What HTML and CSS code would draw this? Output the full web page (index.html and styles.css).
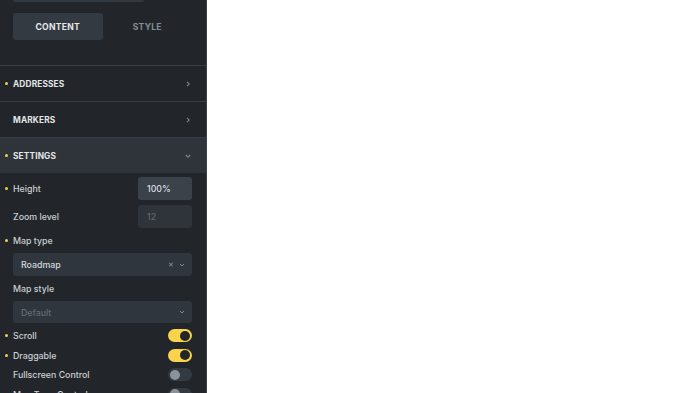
FILE: index.html
```html
<!DOCTYPE html>
<html lang="en">
<head>
<meta charset="utf-8">
<title>Map settings</title>
<link rel="stylesheet" href="styles.css">
</head>
<body>
<aside class="panel">
  <div class="top-input"></div>
  <div class="tabs">
    <div class="tab active">CONTENT</div>
    <div class="tab">STYLE</div>
  </div>

  <div class="section">
    <span class="dot"></span>
    <span class="section-title">ADDRESSES</span>
    <svg class="chev" viewBox="0 0 8 8" width="8" height="8"><path d="M3 1.8l2.2 2.2-2.2 2.2" fill="none" stroke="currentColor" stroke-width="1.1"/></svg>
  </div>
  <div class="section">
    <span class="section-title">MARKERS</span>
    <svg class="chev" viewBox="0 0 8 8" width="8" height="8"><path d="M3 1.8l2.2 2.2-2.2 2.2" fill="none" stroke="currentColor" stroke-width="1.1"/></svg>
  </div>
  <div class="section open">
    <span class="dot"></span>
    <span class="section-title">SETTINGS</span>
    <svg class="chev" viewBox="0 0 8 8" width="8" height="8"><path d="M1.8 3l2.2 2.2 2.2-2.2" fill="none" stroke="currentColor" stroke-width="1.1"/></svg>
  </div>

  <div class="controls">
    <div class="row">
      <span class="dot"></span>
      <span class="label">Height</span>
      <div class="num-input">100%</div>
    </div>
    <div class="row">
      <span class="label">Zoom level</span>
      <div class="num-input placeholder">12</div>
    </div>
    <div class="label-row">
      <span class="dot"></span>
      <span class="label">Map type</span>
    </div>
    <div class="select">
      <span class="select-value">Roadmap</span>
      <span class="clear">&#x2715;</span>
      <svg class="sel-chev" viewBox="0 0 8 8" width="8" height="8"><path d="M2 3l2 2 2-2" fill="none" stroke="currentColor" stroke-width="1"/></svg>
    </div>
    <div class="label-row">
      <span class="label">Map style</span>
    </div>
    <div class="select select-last">
      <span class="select-value placeholder">Default</span>
      <svg class="sel-chev" viewBox="0 0 8 8" width="8" height="8"><path d="M2 3l2 2 2-2" fill="none" stroke="currentColor" stroke-width="1"/></svg>
    </div>
    <div class="toggles">
      <div class="toggle-row">
        <span class="dot"></span>
        <span class="label">Scroll</span>
        <span class="toggle on"><span class="knob"></span></span>
      </div>
      <div class="toggle-row">
        <span class="dot"></span>
        <span class="label">Draggable</span>
        <span class="toggle on"><span class="knob"></span></span>
      </div>
      <div class="toggle-row">
        <span class="label">Fullscreen Control</span>
        <span class="toggle"><span class="knob"></span></span>
      </div>
      <div class="toggle-row">
        <span class="label">Map Type Control</span>
        <span class="toggle"><span class="knob"></span></span>
      </div>
    </div>
  </div>
</aside>
</body>
</html>
```

FILE: styles.css
```css
html, body {
  margin: 0;
  padding: 0;
  background: #ffffff;
  height: 100%;
  overflow: hidden;
}

body {
  font-family: Inter, "Noto Sans", sans-serif;
}

.panel {
  width: 206px;
  height: 393px;
  background: #22262a;
  border-right: 1px solid #3e444b;
  overflow: hidden;
  display: flex;
  flex-direction: column;
}

.top-input {
  margin: 0 62px 0 13px;
  height: 2px;
  background: #333941;
  border-radius: 0 0 3px 3px;
  flex: none;
}

.tabs {
  display: flex;
  margin: 11px 14px 0 13px;
  height: 27px;
  flex: none;
}

.tab {
  flex: 1;
  display: flex;
  align-items: center;
  justify-content: center;
  font-size: 8.6px;
  font-weight: 700;
  letter-spacing: 0.25px;
  color: #858c93;
  border-radius: 3px;
}

.tab.active {
  background: #333a42;
  color: #e6e8ea;
}

.section {
  flex: none;
  position: relative;
  height: 35px;
  border-top: 1px solid #373d44;
  display: flex;
  align-items: center;
  padding: 0 14px 0 13px;
}

.tabs + .section {
  margin-top: 25px;
}

.section.open {
  background: #2e343a;
}

.section-title {
  flex: 1;
  font-size: 8.3px;
  font-weight: 700;
  letter-spacing: 0.15px;
  color: #e4e6e8;
}

.chev {
  color: #7c838a;
  width: 8px;
  height: 8px;
}

.dot {
  position: absolute;
  left: 5px;
  top: 50%;
  width: 3px;
  height: 3px;
  margin-top: -1.5px;
  border-radius: 50%;
  background: #f5d04a;
}

.controls {
  padding: 4px 14px 0 13px;
  display: flex;
  flex-direction: column;
}

.label {
  font-size: 8.8px;
  font-weight: 500;
  color: #cbcfd3;
  flex: 1;
}

.row {
  position: relative;
  display: flex;
  align-items: center;
  height: 23px;
  margin-bottom: 5px;
}

.row .dot,
.label-row .dot,
.toggle-row .dot {
  left: -8px;
}

.num-input {
  width: 54px;
  height: 23px;
  box-sizing: border-box;
  padding-left: 9px;
  display: flex;
  align-items: center;
  background: #3b4249;
  border-radius: 3px;
  font-size: 8.8px;
  font-weight: 500;
  color: #dcdfe2;
}

.num-input.placeholder {
  background: #2e343a;
  color: #5f666d;
}

.row + .label-row {
  margin-top: 1px;
}

.label-row {
  position: relative;
  display: flex;
  align-items: center;
  height: 12px;
  margin: 0 0 7px;
}

.select {
  height: 23px;
  display: flex;
  align-items: center;
  padding: 0 6px 0 8px;
  background: #30363d;
  border-radius: 3px;
  margin-bottom: 6px;
}

.select.select-last {
  height: 22px;
  margin-bottom: 3px;
}

.select-value {
  flex: 1;
  font-size: 8.8px;
  font-weight: 500;
  color: #d6d9dc;
}

.select-value.placeholder {
  color: #646b72;
}

.clear {
  font-size: 7px;
  color: #8a9198;
  margin-right: 4px;
}

.sel-chev {
  color: #80878e;
}

.toggles {
  display: flex;
  flex-direction: column;
}

.toggle-row {
  position: relative;
  display: flex;
  align-items: center;
  height: 19.5px;
}

.toggle {
  width: 24px;
  height: 13px;
  border-radius: 7px;
  background: #343a41;
  position: relative;
  box-sizing: border-box;
}

.toggle .knob {
  position: absolute;
  left: 2px;
  top: 1.5px;
  width: 10px;
  height: 10px;
  border-radius: 50%;
  background: #8a939c;
}

.toggle.on {
  background: #f9d34c;
}

.toggle.on .knob {
  left: auto;
  right: 2px;
  background: #22262a;
}
```
